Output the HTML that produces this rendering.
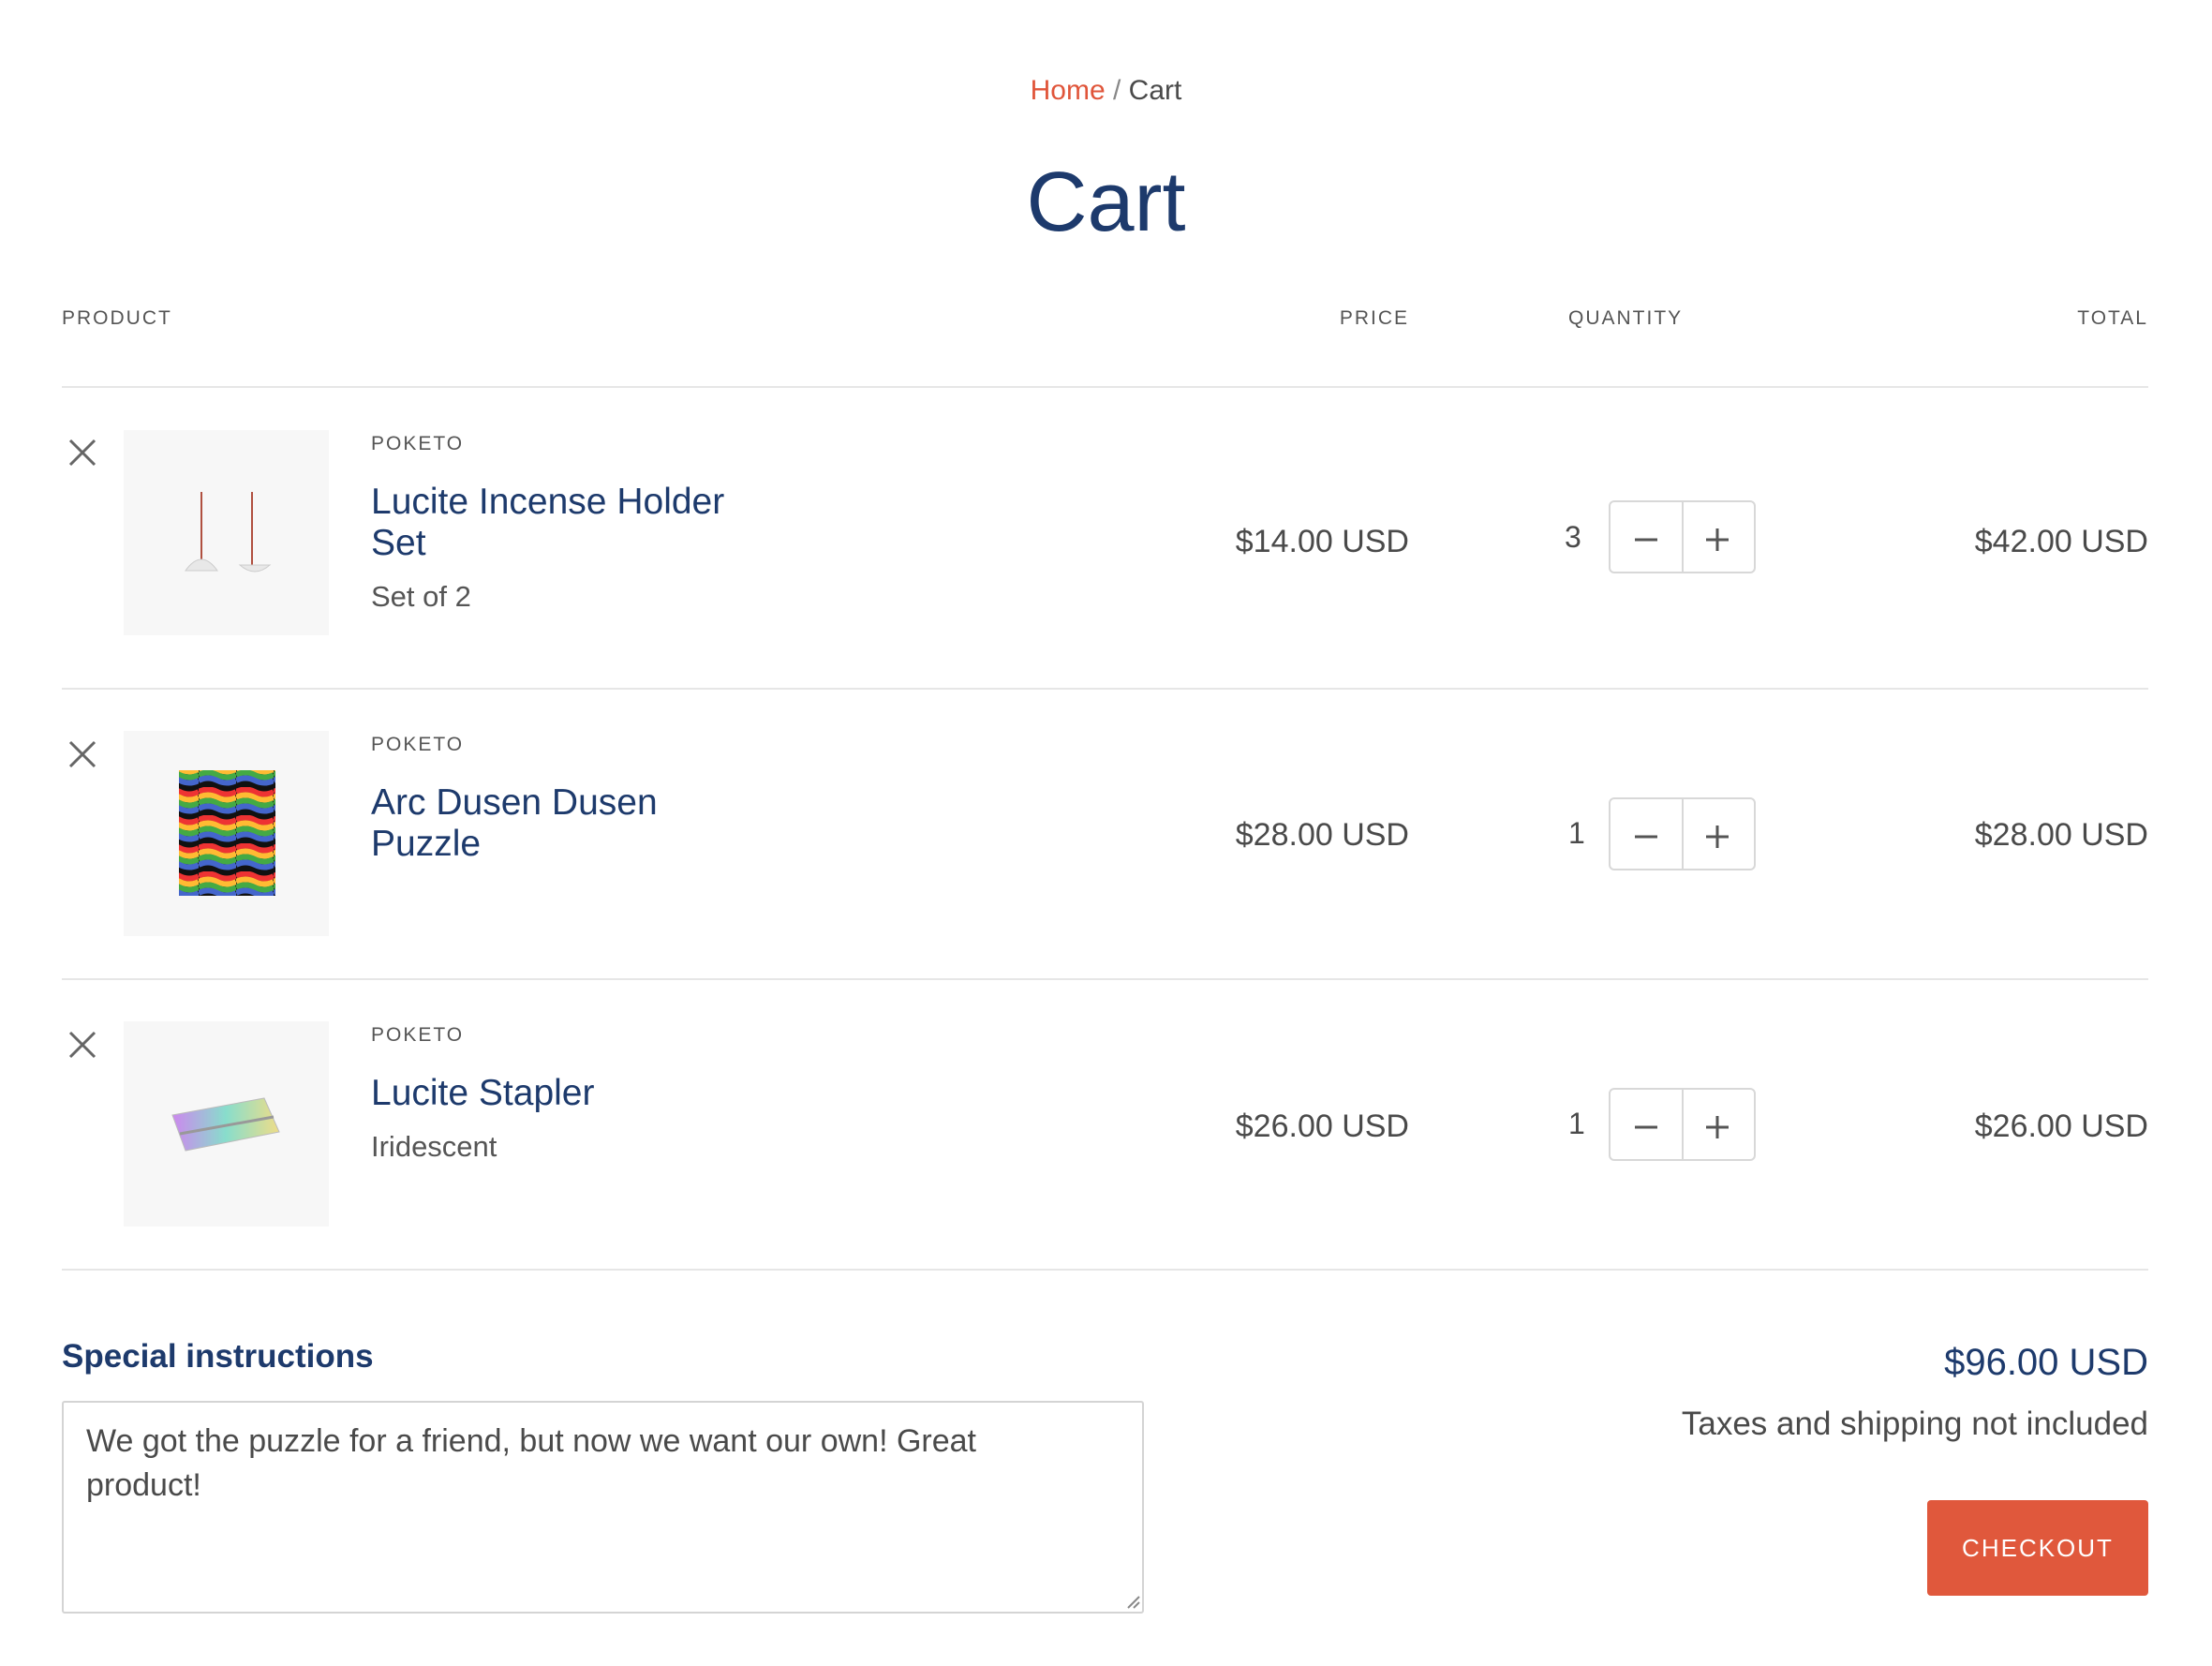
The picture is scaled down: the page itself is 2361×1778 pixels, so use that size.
<!DOCTYPE html>
<html><head><meta charset="utf-8"><style>
*{margin:0;padding:0;box-sizing:border-box}
body{width:2361px;height:1778px;background:#fff;font-family:"Liberation Sans",sans-serif;color:#4a4a4a;position:relative;overflow:hidden}
.a{position:absolute;white-space:nowrap}
.hd{font-size:21px;letter-spacing:2px;color:#555;top:328px}
.line{position:absolute;left:66px;width:2227px;height:2px;background:#e6e6e6}
.x{position:absolute;width:30px;height:30px}
.img{position:absolute;left:132px;width:219px;height:219px;background:#f7f7f7}
.vend{font-size:21px;letter-spacing:2px;color:#555;left:396px}
.tt{font-size:39px;color:#1d3a6c;left:396px;line-height:44px}
.sub{font-size:31px;color:#555;left:396px}
.pr{font-size:34px;right:857px;color:#4a4a4a}
.tot{font-size:34px;right:68px;color:#4a4a4a}
.qn{font-size:32px;color:#4a4a4a}
.box{position:absolute;left:1717px;width:157px;height:78px;border:2px solid #d8d8d8;border-radius:6px}
.box:after{content:"";position:absolute;left:76px;top:0;bottom:0;width:2px;background:#d8d8d8}
.box svg{position:absolute;top:0;left:0}
</style></head><body>
<div class="a" style="left:0;width:2361px;text-align:center;top:80px;font-size:30px"><span style="color:#e0553a">Home</span> <span style="color:#888">/</span> Cart</div>
<div class="a" style="left:0;width:2361px;text-align:center;top:165px;font-size:90px;color:#1d3a6c">Cart</div>
<div class="a hd" style="left:66px">PRODUCT</div>
<div class="a hd" style="right:857px">PRICE</div>
<div class="a hd" style="left:1674px">QUANTITY</div>
<div class="a hd" style="right:68px">TOTAL</div>
<div class="line" style="top:412px"></div>
<div class="line" style="top:734px"></div>
<div class="line" style="top:1044px"></div>
<div class="line" style="top:1354px"></div>

<!-- row1 -->
<svg class="x" style="left:73px;top:468px" viewBox="0 0 30 30"><path d="M2 2L28 28M28 2L2 28" stroke="#666" stroke-width="3"/></svg>
<div class="img" style="top:459px"><svg width="219" height="219"><line x1="83" y1="66" x2="83" y2="148" stroke="#b05040" stroke-width="2"/><line x1="137" y1="66" x2="137" y2="148" stroke="#b05040" stroke-width="2"/><path d="M66 150 Q83 126 100 150Z" fill="#e8e8e8" stroke="#ccc"/><path d="M124 144 Q140 158 156 144Z" fill="#e8e8e8" stroke="#ccc"/></svg></div>
<div class="a vend" style="top:462px">POKETO</div>
<div class="a tt" style="top:514px">Lucite Incense Holder<br>Set</div>
<div class="a sub" style="top:619px">Set of 2</div>
<div class="a pr" style="top:559px">$14.00 USD</div>
<div class="a qn" style="left:1670px;top:555px">3</div>
<div class="box" style="top:534px"><svg width="157" height="78"><path d="M26 40H50M102 40H126M114 28V52" stroke="#555" stroke-width="3"/></svg></div>
<div class="a tot" style="top:559px">$42.00 USD</div>

<!-- row2 -->
<svg class="x" style="left:73px;top:790px" viewBox="0 0 30 30"><path d="M2 2L28 28M28 2L2 28" stroke="#666" stroke-width="3"/></svg>
<div class="img" style="top:780px"><svg width="219" height="219"><defs><pattern id="p" width="40" height="30" patternUnits="userSpaceOnUse"><rect width="40" height="30" fill="#111"/><path d="M0 5Q10 0 20 5T40 5" stroke="#e33" stroke-width="6" fill="none"/><path d="M0 11Q10 6 20 11T40 11" stroke="#fb3" stroke-width="6" fill="none"/><path d="M0 17Q10 12 20 17T40 17" stroke="#4a4" stroke-width="6" fill="none"/><path d="M0 23Q10 18 20 23T40 23" stroke="#46c" stroke-width="6" fill="none"/></pattern></defs><rect x="59" y="42" width="103" height="134" fill="url(#p)"/></svg></div>
<div class="a vend" style="top:783px">POKETO</div>
<div class="a tt" style="top:835px">Arc Dusen Dusen<br>Puzzle</div>
<div class="a pr" style="top:872px">$28.00 USD</div>
<div class="a qn" style="left:1674px;top:871px">1</div>
<div class="box" style="top:851px"><svg width="157" height="78"><path d="M26 40H50M102 40H126M114 28V52" stroke="#555" stroke-width="3"/></svg></div>
<div class="a tot" style="top:872px">$28.00 USD</div>

<!-- row3 -->
<svg class="x" style="left:73px;top:1100px" viewBox="0 0 30 30"><path d="M2 2L28 28M28 2L2 28" stroke="#666" stroke-width="3"/></svg>
<div class="img" style="top:1090px"><svg width="219" height="219"><defs><linearGradient id="g"><stop offset="0" stop-color="#c8e"/><stop offset=".5" stop-color="#8dc"/><stop offset="1" stop-color="#ed8"/></linearGradient></defs><path d="M52 100L150 82L166 118L66 138Z" fill="url(#g)" stroke="#bbb"/><path d="M60 120L160 102" stroke="#999" stroke-width="3"/></svg></div>
<div class="a vend" style="top:1093px">POKETO</div>
<div class="a tt" style="top:1145px">Lucite Stapler</div>
<div class="a sub" style="top:1206px">Iridescent</div>
<div class="a pr" style="top:1183px">$26.00 USD</div>
<div class="a qn" style="left:1674px;top:1181px">1</div>
<div class="box" style="top:1161px"><svg width="157" height="78"><path d="M26 40H50M102 40H126M114 28V52" stroke="#555" stroke-width="3"/></svg></div>
<div class="a tot" style="top:1183px">$26.00 USD</div>

<div class="a" style="left:66px;top:1428px;font-size:35px;font-weight:bold;color:#1d3a6c">Special instructions</div>
<div style="position:absolute;left:66px;top:1495px;width:1155px;height:227px;border:2px solid #d4d4d4;border-radius:3px;padding:18px 24px;font-size:34px;line-height:47px;color:#4a4a4a">We got the puzzle for a friend, but now we want our own! Great<br>product!</div>
<svg style="position:absolute;left:1200px;top:1700px" width="18" height="18"><path d="M4 16L16 4M10 16L16 10" stroke="#888" stroke-width="2"/></svg>
<div class="a" style="right:68px;top:1432px;font-size:40px;color:#1d3a6c">$96.00 USD</div>
<div class="a" style="right:68px;top:1500px;font-size:35px;color:#4a4a4a">Taxes and shipping not included</div>
<div style="position:absolute;left:2057px;top:1601px;width:236px;height:102px;background:#e0583c;border-radius:4px;color:#fff;font-size:26px;letter-spacing:2px;text-align:center;line-height:102px">CHECKOUT</div>
</body></html>
